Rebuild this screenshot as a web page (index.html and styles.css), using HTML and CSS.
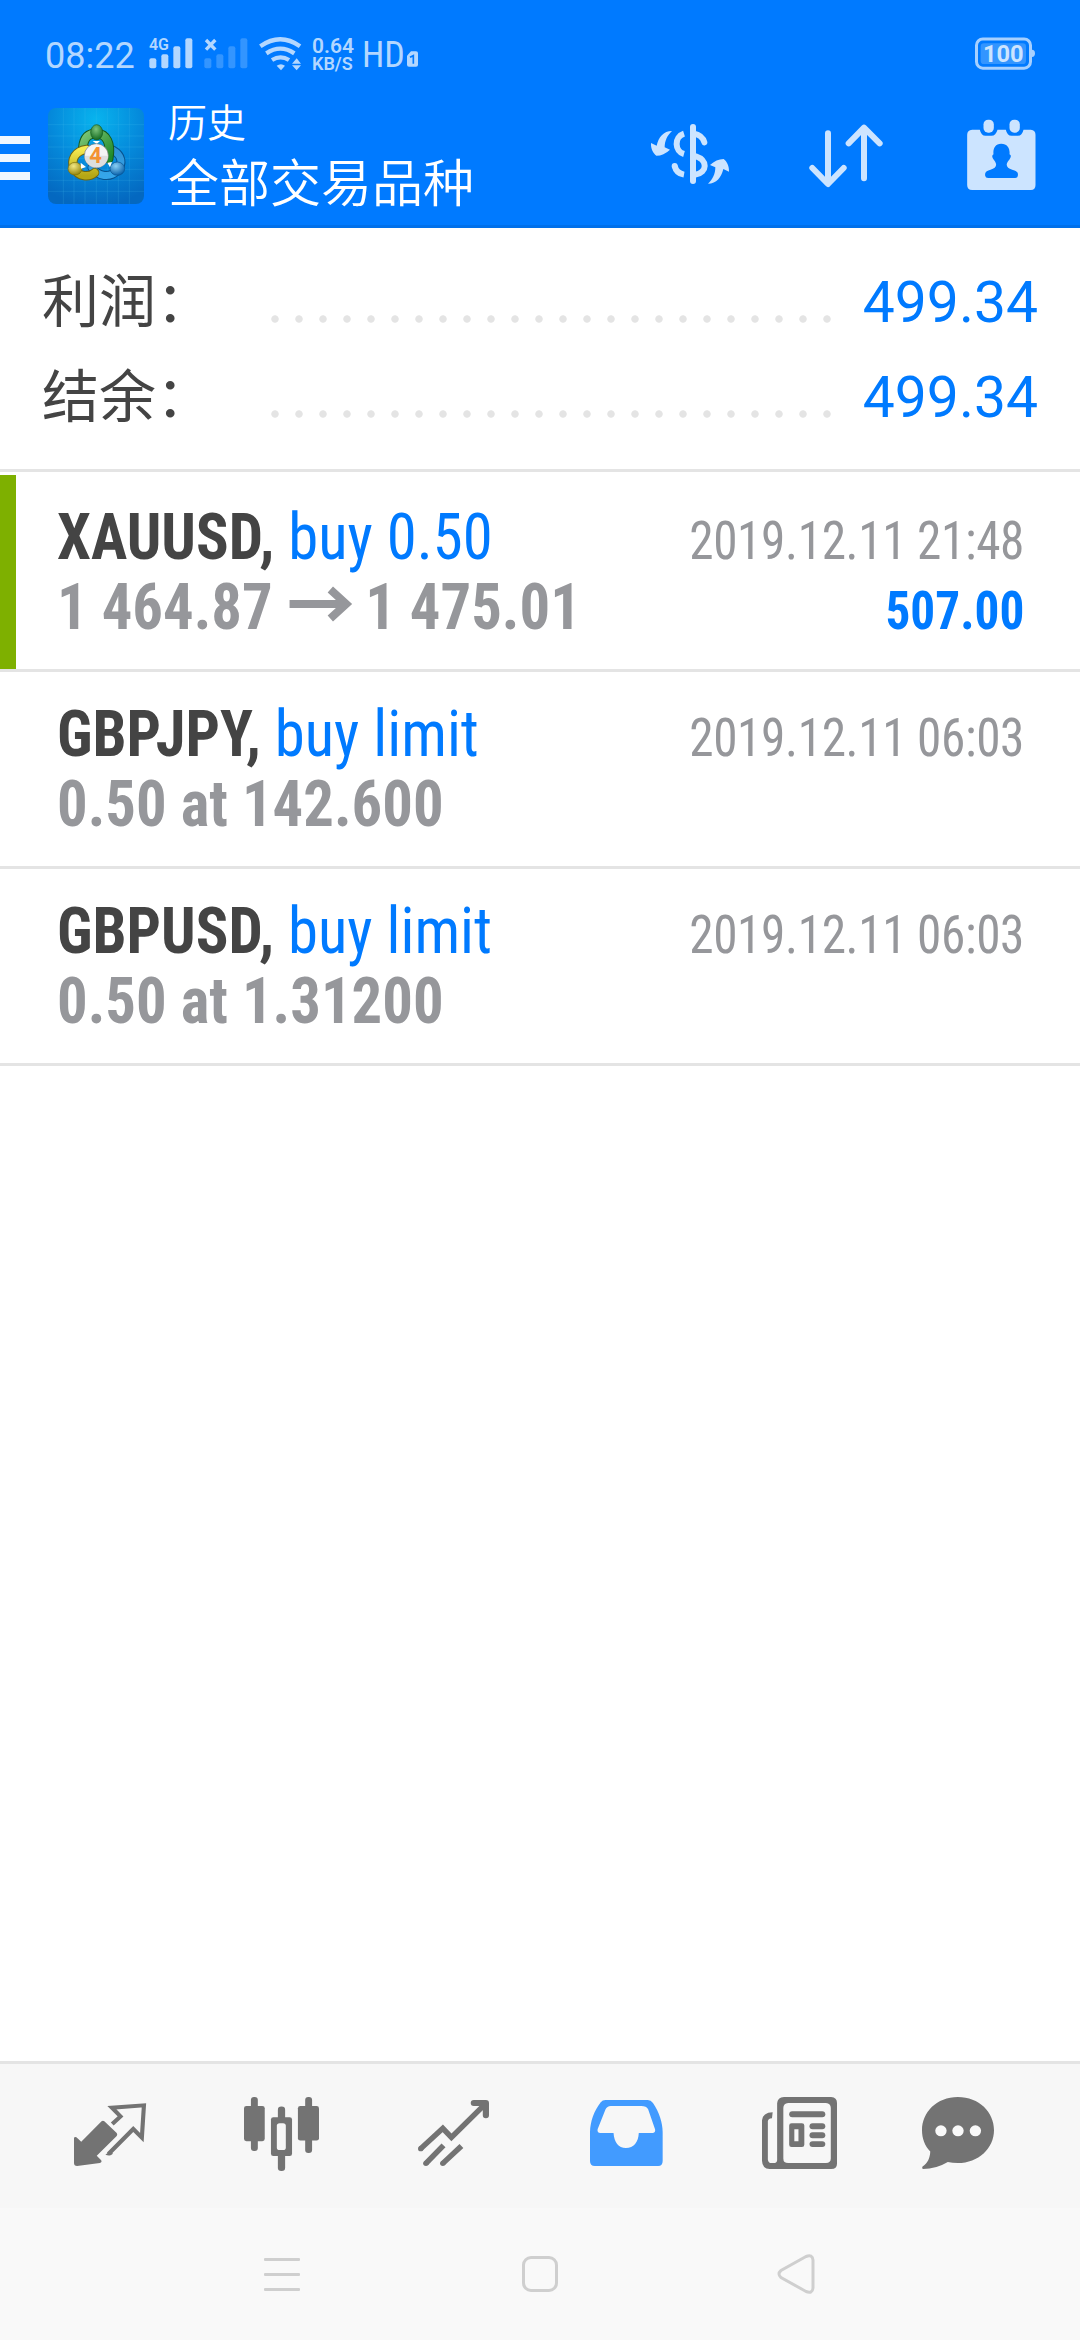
FILE: index.html
```html
<!DOCTYPE html>
<html lang="zh-CN">
<head>
<meta charset="utf-8">
<title>历史</title>
<link rel="stylesheet" href="styles.css">
</head>
<body>
<div class="screen">
  <header class="header">
    <div class="status">
      <span class="clock">08:22</span>
      <svg class="signal" viewBox="446 113 132 96">
        <text x="446" y="153" font-size="48" font-weight="600" textLength="60" lengthAdjust="spacingAndGlyphs">4G</text>
        <rect x="447" y="177" width="21" height="30" rx="6"/><rect x="483" y="165" width="21" height="42" rx="6"/><rect x="519" y="141" width="21" height="66" rx="6"/><rect x="555" y="117" width="21" height="90" rx="6"/>
      </svg>
      <svg class="signal signal-off" viewBox="611 113 132 96">
        <path d="M617 122L645 151M645 122L617 151" stroke="#b3d7ff" stroke-width="10"/>
        <g fill="#3395ff"><rect x="612" y="177" width="21" height="30" rx="6"/><rect x="648" y="165" width="21" height="42" rx="6"/><rect x="684" y="141" width="21" height="66" rx="6"/><rect x="720" y="117" width="21" height="90" rx="6"/></g>
      </svg>
      <svg class="wifi" viewBox="777 113 129 102">
        <g fill="none" stroke="#b3d7ff" stroke-width="13"><path d="M781 141Q841 99 900 141"/><path d="M799 162Q841 134 883 162"/><path d="M816 182Q842 166 867 182"/></g>
        <path d="M830 199Q843 190 855 199L843 213ZM876 193L890 177L903 193ZM876 198H903L890 213Z"/>
      </svg>
      <div class="speed"><span>0.64</span><span class="unit">KB/S</span></div>
      <span class="hd">HD</span>
      <svg class="sim" viewBox="1221 155 33 46"><path d="M1233 155H1248Q1254 155 1254 161V195Q1254 201 1248 201H1227Q1221 201 1221 195V168Z"/><path d="M1230 173L1240 168V192" fill="none" stroke="#007aff" stroke-width="5"/></svg>
      <svg class="battery" viewBox="1125 113 180 97">
        <rect x="1129.500" y="118" width="162" height="87.500" rx="19" fill="none" stroke="#a6d0ff" stroke-width="9"/>
        <rect x="1142" y="131" width="136" height="62" rx="10" fill="#3395ff"/>
        <path d="M1296 150Q1305 150 1305 161T1296 172Z" fill="#a6d0ff"/>
        <text x="1149" y="186" font-size="70" font-weight="700" fill="#cce4ff" textLength="122" lengthAdjust="spacingAndGlyphs">100</text>
      </svg>
    </div>
    <div class="appbar">
      <div class="burger"><i></i><i></i><i></i></div>
      <svg class="logo" viewBox="144 324 288 288">
        <defs>
          <radialGradient id="bg" cx=".5" cy=".12" r=".9"><stop offset="0" stop-color="#08b4ee"/><stop offset=".5" stop-color="#058bdc"/><stop offset="1" stop-color="#0468c0"/></radialGradient>
          <linearGradient id="gr" x1="0" y1="0" x2="1" y2="1"><stop offset="0" stop-color="#7cc576"/><stop offset="1" stop-color="#1f8a2a"/></linearGradient>
          <linearGradient id="ye" x1="0" y1="0" x2="0" y2="1"><stop offset="0" stop-color="#f5ea50"/><stop offset="1" stop-color="#b5a615"/></linearGradient>
          <linearGradient id="bl" x1="0" y1="0" x2="0" y2="1"><stop offset="0" stop-color="#2f93d6"/><stop offset="1" stop-color="#35a5ea"/></linearGradient>
          <radialGradient id="gh" cx=".45" cy=".3" r=".7"><stop offset="0" stop-color="#7cc47c"/><stop offset="1" stop-color="#146a20"/></radialGradient>
          <radialGradient id="yh" cx=".4" cy=".3" r=".7"><stop offset="0" stop-color="#f2e884"/><stop offset="1" stop-color="#96860c"/></radialGradient>
          <radialGradient id="bh" cx=".4" cy=".3" r=".7"><stop offset="0" stop-color="#8ad0f5"/><stop offset="1" stop-color="#0a62ac"/></radialGradient>
        </defs>
        <rect x="144" y="324" width="288" height="288" rx="24" fill="url(#bg)"/>
        <path d="M190 324V612M222 324V612M255 324V612M289 324V612M322 324V612M355 324V612M388 324V612M144 374H432M144 408H432M144 441H432M144 475H432M144 508H432M144 541H432M144 574H432" stroke="#4cc4f0" stroke-opacity=".28" stroke-width="2"/>
        <g fill="none" stroke-linecap="round">
          <path d="M338 450C366 466 370 490 352 512C330 535 295 530 276 503" stroke="#07528f" stroke-width="27"/>
          <path d="M338 450C366 466 370 490 352 512C330 535 295 530 276 503" stroke="url(#bl)" stroke-width="21"/>
          <path d="M249 442C252 408 270 400 290 400C320 402 334 430 326 476" stroke="#14591c" stroke-width="29"/>
          <path d="M249 442C252 408 270 400 290 400C320 402 334 430 326 476" stroke="url(#gr)" stroke-width="23"/>
          <path d="M260 448C225 452 212 480 222 505C236 532 268 532 284 518" stroke="#6f6510" stroke-width="28"/>
          <path d="M260 448C225 452 212 480 222 505C236 532 268 532 284 518" stroke="url(#ye)" stroke-width="22"/>
        </g>
        <ellipse cx="290" cy="397" rx="18" ry="23" fill="url(#gh)" stroke="#135b1c" stroke-width="2"/>
        <ellipse cx="225" cy="506" rx="21" ry="19" fill="url(#yh)" stroke="#7b6f0c" stroke-width="2"/>
        <ellipse cx="352" cy="506" rx="22" ry="20" fill="url(#bh)" stroke="#07528f" stroke-width="2"/>
        <path d="M278 423H300L290 432ZM242 488L258 501L243 506ZM322 488L336 486L330 502Z" fill="#fff"/>
        <circle cx="289" cy="467" r="36" fill="#f4f4f4" stroke="#777" stroke-width="2"/>
        <path d="M254 467H324A35 35 0 0 1 254 467Z" fill="#dedede"/>
        <text x="268" y="489" font-size="64" font-weight="700" fill="#f39232" textLength="38" lengthAdjust="spacingAndGlyphs">4</text>
      </svg>
      <div class="titles"><div class="title">历史</div><div class="subtitle">全部交易品种</div></div>
      <svg class="currency" viewBox="153 372 234 180">
        <rect x="270" y="372" width="18" height="180" rx="9"/>
        <g fill="none" stroke="#cce4ff" stroke-width="18"><path d="M252 401C221 411 224 454 252 462"/><path d="M280 400Q307 405 313 427"  stroke-linecap="round"/><path d="M286 468C324 481 323 516 286 524"/><path d="M252 524Q229 520 224 498" /></g><circle cx="224" cy="498" r="9"/>
        <path id="swap" d="M216 393C190 393 176 412 170 437L153 429C152 447 160 460 169 467Q191 467 210 449L194 442C194 422 202 406 216 393Z"/>
        <use href="#swap" transform="rotate(180 270 472)"/>
      </svg>
      <svg class="sort" viewBox="627 371 222 192"><g fill="none" stroke="#cce4ff" stroke-width="18" stroke-linecap="round" stroke-linejoin="round"><path d="M684 399V550M637 503L684 551L731 503"/><path d="M792 534V384M746 429L792 382L839 429"/></g></svg>
      <svg class="calendar" viewBox="1103 358 206 213">
        <path d="M1118 390H1141Q1145 408 1158 408H1176Q1189 408 1194 390H1219Q1223 408 1236 408H1255Q1268 408 1272 390H1294Q1308 392 1308 405V556Q1308 571 1294 571H1118Q1103 571 1103 556V405Q1103 391 1118 390Z"/>
        <rect x="1152" y="360" width="31" height="39" rx="14"/><rect x="1230" y="360" width="31" height="39" rx="14"/>
        <path d="M1205 432C1225 432 1232 448 1230 464C1238 468 1232 476 1228 482C1216 496 1222 506 1238 510C1256 514 1256 522 1255 528Q1254 535 1247 535H1166Q1158 535 1157 528C1156 520 1158 514 1173 510C1190 506 1195 496 1184 482C1179 476 1175 468 1182 464C1180 448 1186 432 1205 432Z" fill="#007aff"/>
      </svg>
    </div>
  </header>

  <section class="summary">
    <div class="sum-row"><span class="label">利润：</span><span class="dots"></span><span class="value">499.34</span></div>
    <div class="sum-row"><span class="label">结余：</span><span class="dots"></span><span class="value">499.34</span></div>
  </section>

  <main class="deals">
    <article class="deal deal-profit">
      <div class="line"><span class="main"><b class="symbol">XAUUSD,</b> <span class="kind">buy 0.50</span></span><span class="date">2019.12.11 21:48</span></div>
      <div class="line price"><span class="main">1 464.87 <svg class="arrow" viewBox="0 0 62 34" preserveAspectRatio="none"><path d="M0 17H56M41 2.500L57 17L41 31.500" fill="none" stroke="#96979b" stroke-width="8"/></svg> 1 475.01</span><span class="profit">507.00</span></div>
    </article>
    <article class="deal">
      <div class="line"><span class="main"><b class="symbol">GBPJPY,</b> <span class="kind">buy limit</span></span><span class="date">2019.12.11 06:03</span></div>
      <div class="line price"><span class="main">0.50 at 142.600</span></div>
    </article>
    <article class="deal">
      <div class="line"><span class="main"><b class="symbol">GBPUSD,</b> <span class="kind">buy limit</span></span><span class="date">2019.12.11 06:03</span></div>
      <div class="line price"><span class="main">0.50 at 1.31200</span></div>
    </article>
  </main>

  <nav class="tabs">
    <svg class="tab quotes" viewBox="215 189 209 189" preserveAspectRatio="none">
      <path d="M295 244Q299 241 303 244L339 279Q342 284 339 288L281 347L294 361Q297 367 290 369L224 378Q215 378 215 369V293Q218 289 222 292L236 305Z"/>
      <path d="M326 252L350 229L325 203L418 196L412 293L387 267L315 342" fill="none" stroke="#737373" stroke-width="12"/><path d="M306 344L320 333L328 341Q320 350 306 344Z"/>
    </svg>
    <svg class="tab chart" viewBox="709 170 217 223" preserveAspectRatio="none">
      <rect x="729" y="170" width="20" height="163" rx="9"/><rect x="709" y="197" width="60" height="106" rx="7"/>
      <rect x="886" y="170" width="20" height="169" rx="9"/><rect x="865" y="197" width="61" height="104" rx="7"/>
      <rect x="807" y="199" width="21" height="194" rx="10"/><rect x="787" y="231" width="61" height="117" rx="7"/><rect x="804" y="249" width="26" height="81" rx="8" fill="#f7f7f7"/>
    </svg>
    <svg class="tab trade" viewBox="1214 180 206 198" preserveAspectRatio="none">
      <g fill="none" stroke="#737373" stroke-width="16"><path d="M1222 326L1286 265L1311 292L1405 196"/><path d="M1376 189H1411V226" stroke-width="18" stroke-linecap="round" stroke-linejoin="round"/><path d="M1237 370L1288 316M1286 370L1340 318"/></g>
      <circle cx="1222" cy="326" r="8"/><circle cx="1237" cy="370" r="8"/><circle cx="1286" cy="370" r="8"/>
    </svg>
    <svg class="tab history" viewBox="146 180 211 198" preserveAspectRatio="none">
      <path fill-rule="evenodd" d="M191 180H313Q322 180 328 189C346 215 356 250 356 276V363Q356 378 343 378H160Q146 378 146 363V276C147 245 157 214 177 187Q182 180 191 180ZM206 198Q195 199 191 208L168 268Q166 279 176 279H214C216 307 228 324 250 324S286 307 287 279H328Q336 278 334 268L314 208Q309 198 294 198Z"/>
    </svg>
    <svg class="tab news" viewBox="646 170 218 217" preserveAspectRatio="none">
      <path fill-rule="evenodd" d="M710 170H847Q864 171 864 188V371Q864 387 847 387H668Q647 386 646 362V240Q648 217 677 216L675 234Q664 234 663 243V358Q664 369 674 369H684Q690 368 690 361V189Q691 171 710 170ZM722 188Q708 189 708 203V355Q708 369 722 369H832Q846 368 846 355V203Q846 189 832 188Z"/>
      <rect x="725" y="213" width="105" height="18" rx="9"/><path fill-rule="evenodd" d="M732 249H762Q769 249 769 256V314Q769 321 762 321H732Q725 321 725 314V256Q725 249 732 249ZM740 267V303H752V267Z"/>
      <rect x="784" y="249" width="46" height="18" rx="9"/><rect x="784" y="276" width="46" height="18" rx="9"/><rect x="784" y="303" width="46" height="18" rx="9"/>
    </svg>
    <svg class="tab chat" viewBox="1109 170 209 217" preserveAspectRatio="none">
      <path d="M1213 170C1275 170 1318 216 1318 270S1273 369 1213 369Q1197 369 1184 366Q1150 387 1112 387Q1108 386 1110 380C1126 368 1132 354 1133 334C1117 317 1109 294 1109 270C1109 216 1152 170 1213 170Z"/>
      <g fill="#f9f9f9"><circle cx="1164" cy="272" r="16.500"/><circle cx="1213.500" cy="272" r="16.500"/><circle cx="1264" cy="272" r="16.500"/></g>
    </svg>
  </nav>
  <div class="sysnav">
    <div class="recents"><i></i><i></i><i></i></div>
    <div class="home"></div>
    <svg class="back" viewBox="0 0 38 40"><path d="M29 2.500L4 16.500Q0 20 4 23.500L29 37.500Q35.500 40 36 34V6Q35.500 0 29 2.500Z" fill="none" stroke="#cfcfcf" stroke-width="3"/></svg>
  </div>
</div>
</body>
</html>
```
FILE: styles.css
```css
* { box-sizing: border-box; }
body { margin: 0; background: #fff; font-family: Roboto, "Noto Sans CJK SC", sans-serif; }
svg { display: block; flex: none; overflow: visible; }
.screen { width: 1080px; height: 2340px; display: flex; flex-direction: column; overflow: hidden; }

.header { height: 228px; background: #007aff; border-bottom: 3px solid #0070ea; }
.status { display: flex; height: 108px; padding: 37px 45px 0; color: #b3d7ff; fill: #b3d7ff; }
.clock { width: 104px; font-size: 36px; line-height: 39px; font-weight: 450; white-space: nowrap; }
.signal { width: 44px; height: 32px; }
.signal-off { margin-left: 11px; }
.wifi { width: 43px; height: 34px; margin-left: 11px; }
.speed { display: flex; flex-direction: column; width: 50px; margin-left: 10px; padding-top: 1px; font-size: 21px; line-height: 17px; font-weight: 600; }
.unit { font-size: 18px; }
.hd { width: 45px; font-size: 36px; line-height: 37px; font-stretch: 80%; }
.sim { width: 11px; height: 16px; margin-top: 14px; }
.battery { width: 60px; height: 33px; margin-left: auto; }

.appbar { display: flex; height: 117px; fill: #cce4ff; }
.burger { display: flex; flex-direction: column; gap: 10px; width: 30px; padding-top: 28px; }
.burger i { height: 8px; background: #f0f7ff; }
.logo { width: 96px; height: 96px; margin-left: 18px; }
.titles { width: 482px; padding-left: 24px; color: #fff; white-space: nowrap; font-weight: 350; }
.title { font-size: 39px; line-height: 44px; margin-top: -6px; }
.subtitle { font-size: 51px; line-height: 78px; }
.currency { width: 78px; height: 60px; margin: 16px 0 0 25px; }
.sort { width: 74px; height: 64px; margin: 16px 0 0 80px; }
.calendar { width: 69px; height: 71px; margin: 11px 0 0 84px; }

.summary { height: 244px; padding: 27px 42px 0; border-bottom: 3px solid #e4e4e4; }
.sum-row { display: flex; height: 95px; line-height: 95px; font-size: 57px; }
.label { width: 221px; color: #444; white-space: nowrap; }
.dots { width: 576px; height: 8px; margin-top: 60px; background: radial-gradient(circle at 12px 4px, #e4e4e4 3.300px, transparent 4.100px) 0 0 / 24px 8px; }
.value { margin-left: auto; color: #007aff; }

.deals { flex: 1; padding-top: 3px; }
.deal { height: 197px; padding: 27px 56px 0 57px; border-bottom: 3px solid #e4e4e4; font-stretch: 75%; }
.deal-profit { background: linear-gradient(#7eb000, #7eb000) 0 0 / 16px 100% no-repeat; }
.line { display: flex; justify-content: space-between; align-items: baseline; height: 70px; font-size: 65px; line-height: 70px; white-space: nowrap; }
.main { transform: scaleX(.934); transform-origin: 0 0; }
.symbol { color: #444; }
.kind { color: #007aff; }
.price { color: #96979b; font-weight: 700; }
.date, .profit { font-size: 53px; transform: scaleX(.93); transform-origin: 100% 0; }
.date { color: #96979b; font-weight: 400; letter-spacing: -.4px; }
.profit { color: #007aff; }
.arrow { display: inline-block; width: 66px; height: 34px; margin: 0 0 8px 3px; }

.tabs { display: flex; height: 147px; padding: 0 0 0 74px; background: #f7f7f7; border-top: 3px solid #e4e4e4; fill: #737373; }
.quotes { width: 72px; height: 63px; margin-top: 39px; }
.chart { width: 75px; height: 74px; margin: 33px 0 0 98px; }
.trade { width: 71px; height: 66px; margin: 36px 0 0 99px; }
.history { width: 73px; height: 66px; margin: 36px 0 0 101px; fill: #429bff; }
.news { width: 75px; height: 72px; margin: 33px 0 0 99px; }
.chat { width: 72px; height: 72px; margin: 33px 0 0 85px; }

.sysnav { display: flex; height: 132px; padding-left: 264px; background: #f9f9f9; }
.recents { display: flex; flex-direction: column; gap: 12px; width: 36px; padding-top: 50px; }
.recents i { height: 3px; border-radius: 1px; background: #cfcfcf; }
.home { width: 36px; height: 36px; margin: 48px 0 0 222px; border: 3px solid #cfcfcf; border-radius: 9px; }
.back { width: 38px; height: 40px; margin: 46px 0 0 219px; }
```
